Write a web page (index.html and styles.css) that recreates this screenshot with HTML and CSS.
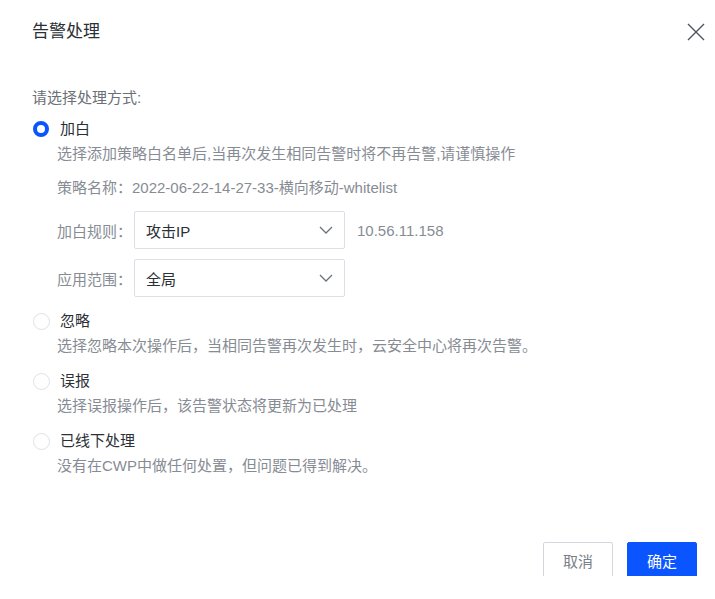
FILE: index.html
```html
<!DOCTYPE html>
<html lang="zh-CN">
<head>
<meta charset="utf-8">
<title>告警处理</title>
<link rel="stylesheet" href="styles.css">
</head>
<body>
<div class="dialog">
  <div class="header">
    <div class="title">告警处理</div>
    <svg class="close" width="18" height="18" viewBox="0 0 18 18"><path d="M1 1L17 17M17 1L1 17" stroke="#4e5562" stroke-width="1.4" fill="none"/></svg>
  </div>
  <div class="content">
    <div class="prompt">请选择处理方式:</div>

    <div class="option first">
      <div class="option-head"><span class="radio checked"></span><span class="label">加白</span></div>
      <div class="desc">选择添加策略白名单后,当再次发生相同告警时将不再告警,请谨慎操作</div>
      <div class="meta">策略名称：2022-06-22-14-27-33-横向移动-whitelist</div>
      <div class="form-row r1">
        <span class="form-label">加白规则：</span>
        <div class="select"><span>攻击IP</span><svg width="14" height="8" viewBox="0 0 14 8"><path d="M1 1L7 7L13 1" stroke="#6b717c" stroke-width="1.3" fill="none"/></svg></div>
        <span class="ip">10.56.11.158</span>
      </div>
      <div class="form-row r2">
        <span class="form-label">应用范围：</span>
        <div class="select"><span>全局</span><svg width="14" height="8" viewBox="0 0 14 8"><path d="M1 1L7 7L13 1" stroke="#6b717c" stroke-width="1.3" fill="none"/></svg></div>
      </div>
    </div>

    <div class="option">
      <div class="option-head"><span class="radio"></span><span class="label">忽略</span></div>
      <div class="desc">选择忽略本次操作后，当相同告警再次发生时，云安全中心将再次告警。</div>
    </div>

    <div class="option">
      <div class="option-head"><span class="radio"></span><span class="label">误报</span></div>
      <div class="desc">选择误报操作后，该告警状态将更新为已处理</div>
    </div>

    <div class="option">
      <div class="option-head"><span class="radio"></span><span class="label">已线下处理</span></div>
      <div class="desc">没有在CWP中做任何处置，但问题已得到解决。</div>
    </div>
  </div>
  <div class="footer">
    <button class="btn cancel">取消</button>
    <button class="btn primary">确定</button>
  </div>
</div>
</body>
</html>
```

FILE: styles.css
```css
* { box-sizing: border-box; }
html, body { margin: 0; padding: 0; background: #fff; }
body {
  font-family: "Liberation Sans", "Noto Sans CJK SC", sans-serif;
  font-size: 15px;
  color: #1f2329;
}
.dialog {
  width: 715px;
  height: 576px;
  overflow: hidden;
  position: relative;
}
.header {
  height: 64px;
  display: flex;
  align-items: center;
  justify-content: space-between;
  padding: 0 10px 0 32px;
}
.title {
  font-size: 17px;
  color: #2b2f36;
  line-height: 24px;
}
.close { display: block; }
.content { padding-left: 32px; }
.prompt {
  margin-top: 23px;
  line-height: 22px;
  color: #6b6f76;
}
.option { margin-top: 13px; }
.option.first { margin-top: 9px; }
.option-head {
  display: flex;
  align-items: center;
  height: 22px;
}
.radio {
  width: 17px;
  height: 17px;
  border-radius: 50%;
  border: 1px solid #dfe1e6;
  margin-left: 1px;
  flex: none;
}
.radio.checked {
  width: 16px;
  height: 16px;
  border: 4.5px solid #0a55ff;
}
.label {
  margin-left: 11px;
  line-height: 22px;
  color: #2b2f36;
}
.radio:not(.checked) + .label { margin-left: 10px; }
.desc {
  margin-top: 3px;
  margin-left: 25px;
  line-height: 22px;
  color: #878c94;
}
.meta {
  margin-top: 12px;
  margin-left: 25px;
  line-height: 22px;
  color: #878c94;
}
.form-row {
  display: flex;
  align-items: center;
  margin-left: 25px;
  height: 38px;
}
.form-row.r1 { margin-top: 12px; }
.form-row.r2 { margin-top: 10px; }
.form-label {
  width: 77px;
  color: #878c94;
}
.select {
  width: 211px;
  height: 38px;
  border: 1px solid #dcdfe5;
  border-radius: 2px;
  display: flex;
  align-items: center;
  justify-content: space-between;
  padding: 0 11px 0 11px;
  color: #2b2f36;
}
.ip {
  margin-left: 12px;
  color: #878c94;
}
.footer {
  display: flex;
  justify-content: flex-end;
  gap: 14px;
  padding-right: 18px;
  margin-top: 65px;
}
.btn {
  width: 70px;
  height: 36px;
  border-radius: 2px;
  font-family: inherit;
  font-size: 15px;
  padding: 0;
}
.cancel {
  background: #fff;
  border: 1px solid #d3d6dc;
  color: #7a7f87;
}
.primary {
  background: #0a55ff;
  border: 1px solid #0a55ff;
  color: #fff;
}
```
